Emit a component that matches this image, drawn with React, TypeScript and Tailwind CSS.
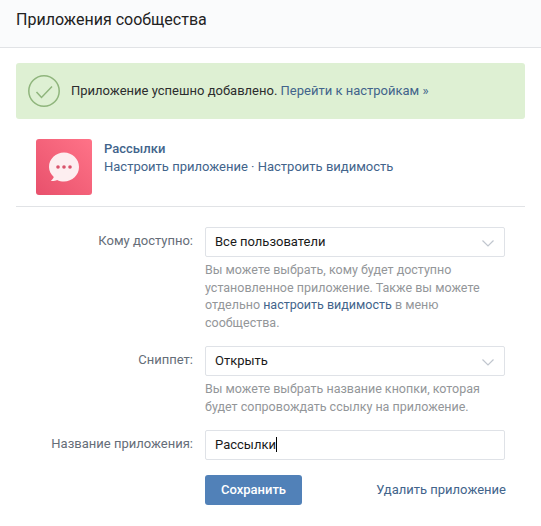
import React from "react";

const Chevron = () => (
  <svg width="12" height="7" viewBox="0 0 12 7" fill="none" className="absolute right-[10px] top-[12px]">
    <path d="M0.5 0.500l5.500 5.500 5.500-5.500" stroke="#c0c6ce" strokeWidth="1.200" />
  </svg>
);

const Label = ({ children }: { children: React.ReactNode }) => (
  <div className="w-[177px] shrink-0 text-right text-[13px] leading-[18px] pt-[5px] text-[#656d78]">{children}</div>
);

const Field = ({ children, chevron }: { children: React.ReactNode; chevron?: boolean }) => (
  <div className="relative w-[300px] h-[30px] border border-[#dfe2e7] rounded-[2px] bg-white pl-[9px] text-[13px] leading-[27px] text-[#1a1a1a]">
    {children}
    {chevron && <Chevron />}
  </div>
);

const Help = ({ children }: { children: React.ReactNode }) => (
  <div className="mt-[4px] text-[12.5px] leading-[17.5px] text-[#939699] w-[300px]">{children}</div>
);

export default function App() {
  return (
    <div className="w-[541px] h-[526px] bg-white overflow-hidden font-['Roboto',sans-serif]">
      <div className="h-[48px] bg-[#fafbfc] border-b border-[#e1e3e6] pl-[16px] text-[16px] leading-[40px] text-[#222222]">
        Приложения сообщества
      </div>
      <div className="mx-[16px] mt-[15px] h-[56px] rounded-[3px] bg-[#def0d3] flex items-center pl-[12px]">
        <svg width="32" height="32" viewBox="0 0 32 32" fill="none">
          <circle cx="16" cy="16" r="15.2" stroke="#8fb57c" strokeWidth="1.5" />
          <path d="M8.5 17l5 5.500L24 11.500" stroke="#8fb57c" strokeWidth="1.5" />
        </svg>
        <div className="ml-[11px] text-[13px] text-[#2c2d2e]">
          Приложение успешно добавлено. <span className="text-[#42648b]">Перейти к настройкам »</span>
        </div>
      </div>
      <div className="ml-[36px] mt-[20px] flex">
        <div className="w-[56px] h-[56px] rounded-[3px] bg-gradient-to-tr from-[#e8506c] to-[#ff7388] flex items-center justify-center">
          <svg width="32" height="30" viewBox="0 0 32 30">
            <path d="M16 0.5c8.3 0 15 6.5 15 14.5s-6.700 14.500-15 14.500c-2.500 0-4.800-.6-6.900-1.600-1.700.9-4 1.300-6.300 1 1.400-1 2.500-2.500 3-3.900C2.900 22.300 1 18.900 1 15 1 7 7.700.5 16 .5z" fill="#fdeef0" />
            <circle cx="10" cy="15" r="1.800" fill="#d9536c" />
            <circle cx="16" cy="15" r="1.800" fill="#d9536c" />
            <circle cx="22" cy="15" r="1.800" fill="#d9536c" />
          </svg>
        </div>
        <div className="ml-[12px] pt-[1px] text-[13px] leading-[18px] text-[#42648b]">
          <div className="font-medium">Рассылки</div>
          <div>Настроить приложение · Настроить видимость</div>
        </div>
      </div>
      <div className="mx-[16px] mt-[11px] border-t border-[#e1e3e6]" />
      <div className="mt-[20px] pl-[16px]">
        <div className="flex">
          <Label>Кому доступно:</Label>
          <div className="ml-[12px]">
            <Field chevron>Все пользователи</Field>
            <Help>
              Вы можете выбрать, кому будет доступно установленное приложение. Также вы можете отдельно{" "}
              <span className="text-[#42648b]">настроить видимость</span> в меню сообщества.
            </Help>
          </div>
        </div>
        <div className="flex mt-[15px]">
          <Label>Сниппет:</Label>
          <div className="ml-[12px]">
            <Field chevron>Открыть</Field>
            <Help>Вы можете выбрать название кнопки, которая будет сопровождать ссылку на приложение.</Help>
          </div>
        </div>
        <div className="flex mt-[15px]">
          <Label>Название приложения:</Label>
          <div className="ml-[12px]">
            <Field>
              <span className="border-r border-black">Рассылки</span>
            </Field>
          </div>
        </div>
        <div className="flex mt-[15px] ml-[189px] items-center justify-between w-[301px]">
          <div className="w-[97px] h-[30px] rounded-[3px] bg-[#5181b8] text-white text-[13px] font-medium leading-[30px] text-center">
            Сохранить
          </div>
          <div className="text-[13px] text-[#42648b]">Удалить приложение</div>
        </div>
      </div>
    </div>
  );
}
